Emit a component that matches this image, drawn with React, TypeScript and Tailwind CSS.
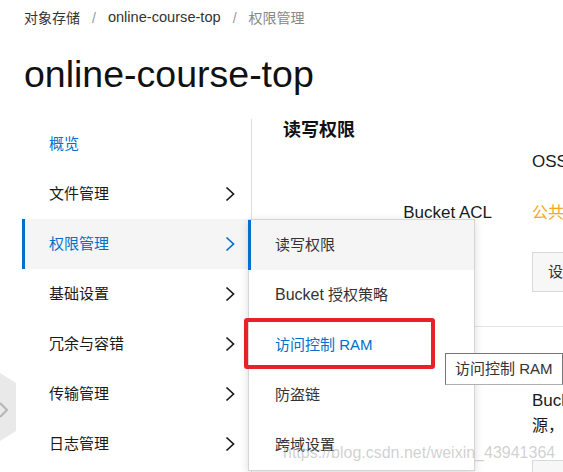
import React from "react";

const Chevron = ({ color = "#1a1a1a" }: { color?: string }) => (
  <svg width="10" height="16" viewBox="0 0 10 16" fill="none">
    <polyline points="1.5,1.5 8.5,8 1.5,14.5" stroke={color} strokeWidth="1.7" strokeLinejoin="miter" />
  </svg>
);

const navItems = [
  { label: "概览", chevron: false },
  { label: "文件管理", chevron: true },
  { label: "权限管理", chevron: true, active: true },
  { label: "基础设置", chevron: true },
  { label: "冗余与容错", chevron: true },
  { label: "传输管理", chevron: true },
  { label: "日志管理", chevron: true },
];

const popupItems = ["读写权限", "Bucket 授权策略", "访问控制 RAM", "防盗链", "跨域设置"];

export default function App() {
  return (
    <div className="relative w-[563px] h-[472px] overflow-hidden bg-white font-['Liberation_Sans','Noto_Sans_CJK_SC',sans-serif] text-[#333]">
      {/* Breadcrumb */}
      <div className="h-[36px] flex items-center px-[24px] text-[14px] whitespace-nowrap">
        <span className="text-[#333]">对象存储</span>
        <span className="mx-[12px] text-[#999]">/</span>
        <span className="text-[#333] text-[14.6px]">online-course-top</span>
        <span className="mx-[12px] text-[#999]">/</span>
        <span className="text-[#888]">权限管理</span>
      </div>

      {/* Title */}
      <h1 className="mt-[20px] mb-[27px] h-[36px] leading-[36px] px-[24px] text-[37.5px] text-[#111] whitespace-nowrap">
        online-course-top
      </h1>

      {/* Main */}
      <div className="flex">
        <nav className="ml-[22px] w-[230px] shrink-0 border-r border-[#dddddd]">
          {navItems.map((it) => (
            <div
              key={it.label}
              className={
                it.active
                  ? "h-[50px] flex items-center justify-between border-l-[3px] border-[#0070cc] bg-[#f5f5f5] pl-[24px] pr-[16px] text-[15px] text-[#0070cc]"
                  : it.label === "概览"
                  ? "h-[50px] flex items-center justify-between pl-[27px] pr-[16px] text-[15px] text-[#0070cc]"
                  : "h-[50px] flex items-center justify-between pl-[27px] pr-[16px] text-[15px] text-[#1a1a1a]"
              }
            >
              <span>{it.label}</span>
              {it.chevron && <Chevron color={it.active ? "#0070cc" : "#1a1a1a"} />}
            </div>
          ))}
        </nav>

        <div className="flex-1 min-w-0 whitespace-nowrap text-[16px] text-[#1a1a1a]">
          <div className="h-[22px] flex items-center pl-[31px] text-[18px] font-bold text-[#111]">读写权限</div>
          <div className="mt-[9px] h-[24px] flex items-center">
            <span className="w-[240px] shrink-0" />
            <span className="ml-[40px] text-[17px]">OSS 提供 ACL 权限控制方法</span>
          </div>
          <div className="mt-[27px] h-[24px] flex items-center">
            <span className="w-[240px] shrink-0 text-right text-[17px]">Bucket ACL</span>
            <span className="ml-[40px] text-[#f5a623]">公共读写</span>
          </div>
          <div className="mt-[27px] h-[40px] flex">
            <span className="w-[240px] shrink-0" />
            <span className="ml-[40px] h-[40px] flex items-center border border-[#d9d9d9] bg-[#f7f7f7] px-[15px] text-[15px] text-[#333]">
              设置读写权限
            </span>
          </div>
          <div className="mt-[34px] ml-[31px] h-px bg-[#e5e5e5]" />
          <div className="mt-[61px] flex">
            <span className="w-[240px] shrink-0" />
            <div className="ml-[40px] flex flex-col">
              <span className="h-[25px] leading-[25px] text-[17px]">Bucket 授权策略用于授权其他用户访问指定资</span>
              <span className="h-[25px] leading-[25px]">
                源，<span className="text-[#f5a623]">了解详情</span>
              </span>
            </div>
          </div>
          <div className="mt-[22px] flex">
            <span className="w-[240px] shrink-0" />
            <span className="ml-[40px] h-[40px] flex items-center border border-[#d9d9d9] bg-[#f7f7f7] px-[15px] text-[15px] text-[#333]">
              设置授权策略
            </span>
          </div>
        </div>
      </div>

      {/* Left collapse tab */}
      <svg className="absolute left-0 top-[373px]" width="17" height="68" viewBox="0 0 17 68">
        <polygon points="0,0 16,10 16,58 0,68" fill="#e9e9e9" />
        <polyline points="0,30 7,37 0,44" fill="none" stroke="#b5b5b5" strokeWidth="2" />
      </svg>

      {/* Popup submenu */}
      <div className="absolute left-[248px] top-[219px] w-[227px] border border-[#d5d5d5] bg-white shadow-[0_2px_8px_rgba(0,0,0,0.15)] text-[15px] whitespace-nowrap">
        {popupItems.map((p, i) => (
          <div
            key={p}
            className={
              i === 0
                ? "-ml-px h-[50px] flex items-center border-l-[3px] border-[#0070cc] bg-[#f5f5f5] pl-[24px] text-[#333]"
                : i === 2
                ? "h-[50px] flex items-center pl-[26px] text-[#0070cc]"
                : "h-[50px] flex items-center pl-[26px] text-[#333]"
            }
          >
            {p.startsWith("Bucket") ? (
              <>
                <span className="text-[16px]">Bucket</span>&nbsp;授权策略
              </>
            ) : (
              p
            )}
          </div>
        ))}
      </div>

      {/* Red highlight box */}
      <div className="absolute left-[244px] top-[318px] w-[191px] h-[51px] border-[4px] border-[#e8202a] rounded-[3px]" />

      {/* Tooltip */}
      <div className="absolute left-[445px] top-[353px] h-[32px] flex items-center border border-[#767676] border-b-[#b0b0b0] bg-white px-[9px] text-[15px] text-[#333] whitespace-nowrap">
        访问控制 RAM
      </div>

      {/* Watermark */}
      <div className="absolute left-[283px] top-[443px] text-[16px] leading-[20px] text-[rgba(170,170,170,0.55)] whitespace-nowrap pointer-events-none">
        https://blog.csdn.net/weixin_43941364
      </div>
    </div>
  );
}
